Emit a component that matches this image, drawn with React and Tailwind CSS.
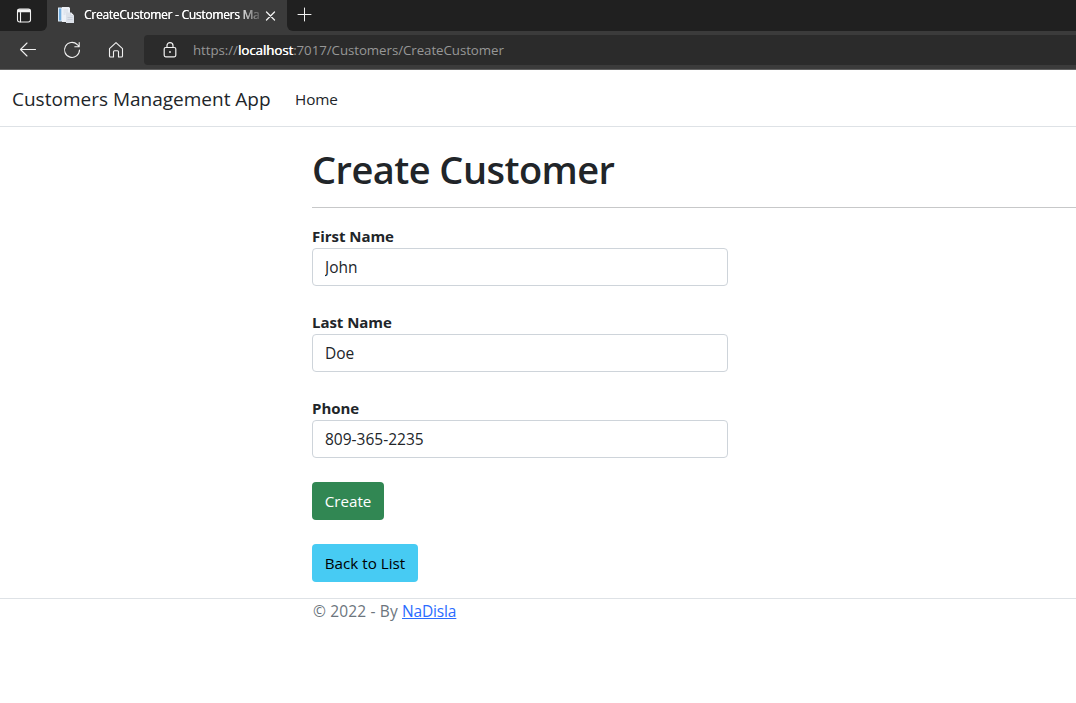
import React from "react";

const stroke = { fill: "none", stroke: "#f1f1f1", strokeLinecap: "round", strokeLinejoin: "round" };

function TabStrip() {
  return (
    <div className="flex h-[31px] shrink-0 bg-[#3b3b3b]">
      <div className="flex w-[47px] items-center justify-center rounded-br-md bg-[#202020]">
        <svg className="size-[16px]" viewBox="0 0 16 16" {...stroke} strokeWidth="1.1">
          <rect x="1.5" y="1" width="13" height="13" rx="2.2" />
          <path d="M2.3 2h11.4M2 3.5h12" strokeWidth="1.6" />
          <path d="M4.5 4.5v9.3" />
        </svg>
      </div>
      <div className="flex w-[240px] items-center pl-[11px]">
        <svg className="mb-px size-[16px] shrink-0" viewBox="0 0 16 16">
          <path d="M0 .5h4v14H0z" fill="#dce9f5" />
          <path d="M1 1.5h2.2v12H1z" fill="#72addf" />
          <path d="M4 0h7l1 1v14H4z" fill="#edf1f7" />
          <path d="M5.5 3h4.5M5.5 5h4.5M5.5 7h2" stroke="#d3dae5" fill="none" />
          <path d="M8 5.5h5l3 3V16H8z" fill="#dce1e9" />
          <path d="M13 5.5v3h3" fill="#f8f9fb" stroke="#c6cdd8" strokeWidth=".6" />
          <path d="M9.5 10.5h5M9.5 12.5h5" stroke="#c3cad6" strokeWidth=".8" />
        </svg>
        <div className="ml-[10px] w-[177px] whitespace-nowrap pb-[2px] text-[12px] leading-[16px] tracking-[-0.26px] text-white [text-shadow:0.2px_0_0_white] [mask-image:linear-gradient(to_right,black_154px,transparent_180px)]">
          CreateCustomer - Customers Ma
        </div>
        <svg className="ml-[3px] size-[12px] shrink-0" viewBox="0 0 12 12" {...stroke} strokeWidth="1.3">
          <path d="M2.5 2l8 8M10.5 2l-8 8" />
        </svg>
      </div>
      <div className="flex flex-1 items-center rounded-bl-md bg-[#202020] pl-[10px]">
        <svg className="mb-px size-[16px]" viewBox="0 0 16 16" {...stroke} strokeWidth="1">
          <path d="M1 7.5h13M7.5 1v13" />
        </svg>
      </div>
    </div>
  );
}

function Toolbar() {
  return (
    <div className="flex h-[39px] shrink-0 items-center border-b border-[#626262] bg-[#3b3b3b]">
      <svg className="ml-[19px] size-[18px]" viewBox="0 0 18 18" {...stroke} strokeWidth="1.1">
        <path d="M16.5 8.5H1.5M8 2L1.5 8.5 8 15" />
      </svg>
      <svg className="ml-[26px] size-[18px]" viewBox="0 0 18 18" {...stroke} strokeWidth="1.1">
        <path d="M16.5 9A7.5 7.5 0 1 1 14.2 3.5L16 5.5M16.2 1.5v4.3h-4.4" />
      </svg>
      <svg className="ml-[26px] size-[18px]" viewBox="0 0 18 18" {...stroke} strokeWidth="1.1">
        <path d="M2.5 7.7L9 1.6l6.5 6.1v7.3q0 1-1 1h-3v-5.2q0-1-1-1h-3q-1 0-1 1V16h-3q-1 0-1-1z" />
      </svg>
      <div className="ml-[19px] flex h-[30px] flex-1 items-center rounded-l-[4px] bg-[#2b2b2b] pl-[18px]">
        <svg className="size-[16px]" viewBox="0 0 16 16" {...stroke} strokeWidth="1.2">
          <rect x="2.2" y="5.5" width="11.6" height="9.3" rx="1.5" />
          <path d="M5 5.3V3.6a3 3 0 0 1 6 0v1.7" />
          <circle cx="8" cy="10" r=".9" fill="#f1f1f1" stroke="none" />
        </svg>
        <div className="ml-[15px] whitespace-nowrap text-[13.3px] leading-[20px] tracking-[-0.06px] text-[#979797]">
          https://<span className="tracking-[-0.05px] text-white [text-shadow:0.4px_0_0_white]">localhost</span>:7017/Customers/CreateCustomer
        </div>
      </div>
    </div>
  );
}

function Field({ label, value }) {
  return (
    <div className="mb-6 flex w-[416px] flex-col">
      <label className="h-6 text-[15px] font-bold leading-6 tracking-[-0.04px]">{label}</label>
      <input
        className="h-[38px] rounded-[4px] border border-[#ced4da] bg-white px-3 text-[15.5px] text-[#212529] outline-none"
        defaultValue={value}
        aria-label={label}
      />
    </div>
  );
}

export default function App() {
  return (
    <div className="flex h-[703px] w-full flex-col overflow-hidden bg-white font-['Open_Sans','Noto_Sans',sans-serif] text-[#212529]">
      <TabStrip />
      <Toolbar />
      <nav className="flex h-[57px] shrink-0 items-center border-b border-[#dee2e6] pl-3 pt-[2px]">
        <a className="w-[283px] whitespace-nowrap text-[19px] leading-[30px]">Customers Management App</a>
        <a className="text-[15.3px] leading-6 tracking-[-0.1px]">Home</a>
      </nav>
      <main className="ml-[312px] flex flex-col items-start pt-4">
        <h1 className="h-12 whitespace-nowrap text-[38px] font-semibold leading-[52px] tracking-[-0.55px]">Create Customer</h1>
        <hr className="my-4 w-full border-t border-[#c7c8c9]" />
        <Field label="First Name" value="John" />
        <Field label="Last Name" value="Doe" />
        <Field label="Phone" value="809-365-2235" />
        <button className="mb-6 h-[38px] w-[72px] rounded-[4px] bg-[#318753] text-[15.2px] text-white">Create</button>
        <button className="mb-4 h-[38px] w-[106px] whitespace-nowrap rounded-[4px] bg-[#47cbf3] text-[15.2px] text-black">Back to List</button>
      </main>
      <footer className="border-t border-[#dee2e6] pl-[313px] text-[15.5px] leading-6 tracking-[0.15px] text-[#6c757d]">
        © 2022 - By <a className="tracking-[-0.15px] text-[#2b6cff] underline">NaDisla</a>
      </footer>
    </div>
  );
}
